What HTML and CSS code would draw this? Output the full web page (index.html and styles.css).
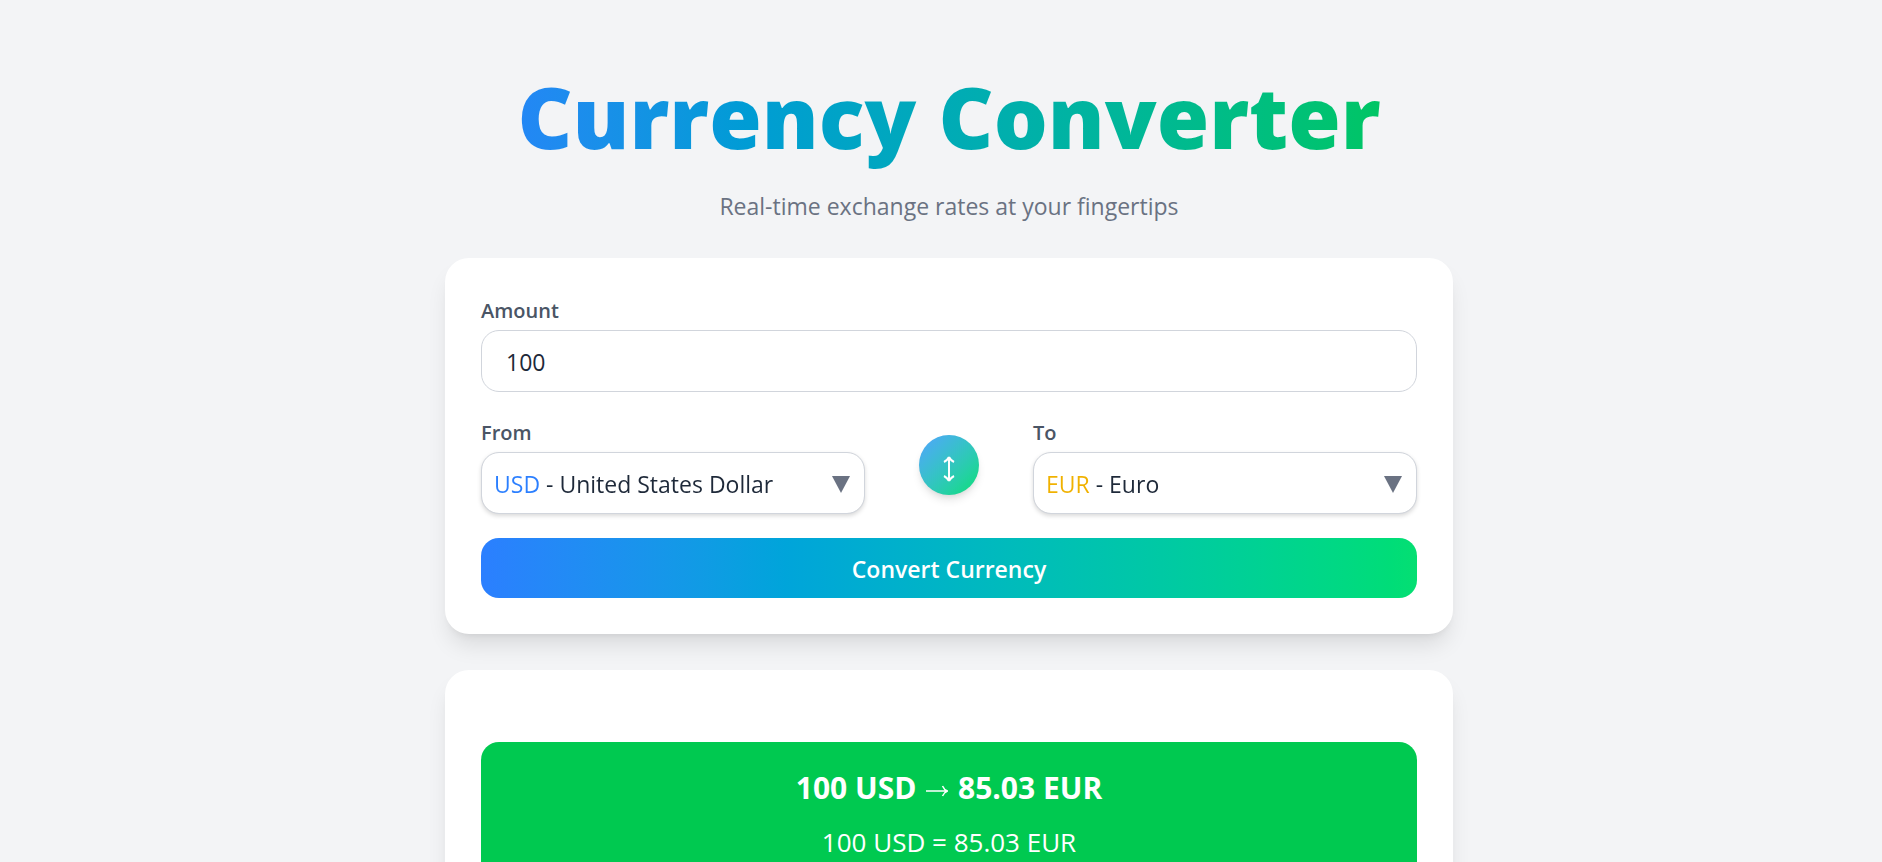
FILE: index.html
```html
<!DOCTYPE html>
<html lang="en">
<head>
    <meta charset="UTF-8">
    <meta name="viewport" content="width=device-width, initial-scale=1.0">
    <title>Currency Converter</title>
    <link rel="stylesheet" href="styles.css">
</head>
<body>

<main class="container">
    <header class="header">
        <h1 class="title">Currency Converter</h1>
        <p class="subtitle">Real-time exchange rates at your fingertips</p>
    </header>

    <form class="card converter">
        <div class="field">
            <label for="amount">Amount</label>
            <input type="text" inputmode="decimal" id="amount" class="input" value="100">
        </div>

        <div class="currencies">
            <div class="field">
                <label for="from">From</label>
                <div class="select-wrap">
                    <select id="from" class="select usd">
                        <option value="USD">USD - United States Dollar</option>
                    </select>
                </div>
            </div>

            <button type="button" class="swap" aria-label="Swap currencies">
                <svg width="12" height="26" viewBox="0 0 12 26" fill="none" stroke="#fff" stroke-width="2">
                    <path d="M6 2V24"/>
                    <path d="M6 1C5 3 3 5 1 6M6 1C7 3 9 5 11 6M6 25C5 23 3 21 1 20M6 25C7 23 9 21 11 20"/>
                </svg>
            </button>

            <div class="field">
                <label for="to">To</label>
                <div class="select-wrap">
                    <select id="to" class="select eur">
                        <option value="EUR">EUR - Euro</option>
                    </select>
                </div>
            </div>
        </div>

        <button type="submit" class="convert">Convert Currency</button>
    </form>

    <section class="card result-card">
        <div class="result">
            <h2 class="result-title">100 USD
                <svg class="arrow" width="22" height="14" viewBox="0 0 22 14" fill="none" stroke="#fff" stroke-width="1.5">
                    <path d="M0 6H21M16.5 1C17.5 3.5 19 5 21.5 6C19 7 17.5 8.5 16.5 11"/>
                </svg>
                85.03 EUR</h2>
            <p class="result-text">100 USD = 85.03 EUR</p>
        </div>
    </section>
</main>

<script>
    document.querySelector('.converter').addEventListener('submit', (e) => {
        e.preventDefault();
    });
</script>
</body>
</html>
```
FILE: styles.css
```css
* {
    box-sizing: border-box;
}

body {
    margin: 0;
    padding: 56px 0 36px 16px;
    background-color: #f3f4f6;
    color: #1e2939;
    font-family: "Segoe UI", "Open Sans", "Noto Sans", sans-serif;
    font-size: 23px;
    line-height: 36px;
}

h1, h2, p {
    margin: 0;
}

.container {
    max-width: 1008px;
    margin: 0 auto;
}

.header {
    margin-bottom: 34px;
    text-align: center;
}

.title {
    margin-bottom: 12px;
    font-size: 85px;
    font-weight: 800;
    line-height: 120px;
    white-space: nowrap;
    background-image: linear-gradient(to right in oklab, #2b7fff, #00c950);
    background-clip: text;
    color: transparent;
}

.subtitle {
    color: #6a7282;
}

.card {
    padding: 36px;
    background-color: #fff;
    border-radius: 24px;
    box-shadow: 0 15px 22px -4px rgba(0, 0, 0, 0.1), 0 6px 9px -6px rgba(0, 0, 0, 0.1);
}

.card + .card {
    margin-top: 36px;
}

.converter {
    display: flex;
    flex-direction: column;
    gap: 24px;
}

.field label {
    display: block;
    margin-bottom: 3px;
    color: #4a5565;
    font-size: 20px;
    font-weight: 600;
    line-height: 33px;
}

.input,
.select {
    display: block;
    width: 100%;
    height: 62px;
    border: 1px solid #d1d5dc;
    border-radius: 18px;
    font: inherit;
    color: #1e2939;
}

.input {
    padding: 2px 24px 0;
    background-color: #fff;
}

.currencies {
    display: grid;
    grid-template-columns: 1fr 60px 1fr;
    column-gap: 54px;
    align-items: center;
}

.select-wrap {
    position: relative;
}

.select-wrap::after {
    content: "";
    position: absolute;
    top: 24px;
    right: 15px;
    border: 9px solid transparent;
    border-top: 17px solid #6a7282;
    border-bottom: 0;
    pointer-events: none;
}

/* the currency code gets its own colour */
.select {
    appearance: none;
    padding: 2px 48px 0 12px;
    background-image: linear-gradient(to right, var(--code) 60px, #1e2939 60px);
    background-clip: text;
    color: transparent;
    box-shadow: 0 2px 4px rgba(0, 0, 0, 0.15);
}

.select option {
    color: #1e2939;
}

.usd {
    --code: #2b7fff;
}

.eur {
    --code: #f0b100;
}

.swap {
    display: flex;
    align-items: center;
    justify-content: center;
    width: 60px;
    height: 60px;
    padding: 8px 0 0;
    border: none;
    border-radius: 50%;
    background-image: linear-gradient(to bottom right in oklab, #51a2ff, #05df72);
    box-shadow: 0 6px 9px -1px rgba(0, 0, 0, 0.1), 0 3px 6px -3px rgba(0, 0, 0, 0.1);
    cursor: pointer;
}

.convert {
    height: 60px;
    padding: 2px 0 0;
    border: none;
    border-radius: 18px;
    background-image: linear-gradient(to right in oklab, #2b7fff, #05df72);
    color: #fff;
    font: inherit;
    font-weight: 600;
    cursor: pointer;
}

.result-card {
    padding-top: 72px;
}

.result {
    padding: 24px;
    border-radius: 18px;
    background-color: #00c950;
    color: #fff;
    text-align: center;
}

.result-title {
    margin-bottom: 12px;
    font-size: 30px;
    font-weight: 700;
    line-height: 43px;
}

.arrow {
    margin: 0 2px;
}

.result-text {
    font-size: 26px;
    line-height: 42px;
}
```
